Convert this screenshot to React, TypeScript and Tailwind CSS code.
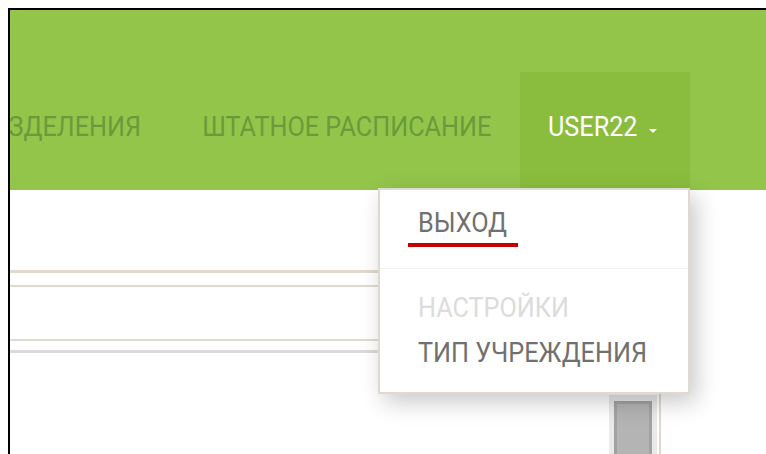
import React from "react";

const navItems = [
  { label: "ПОДРАЗДЕЛЕНИЯ", width: "w-[300px]" },
  { label: "ШТАТНОЕ РАСПИСАНИЕ", width: "w-[350px]" },
];

function Caret() {
  return (
    <span className="ml-[8px] mt-[2px] inline-block h-0 w-0 border-x-[4px] border-t-[4px] border-x-transparent border-t-white" />
  );
}

function UserMenu() {
  return (
    <div className="absolute left-[378px] top-[188px] w-[312px] h-[206px] bg-white border-2 border-[#e0d9cd] shadow-[6px_8px_22px_rgba(0,0,0,0.22)] text-[28px] leading-none">
      <div className="h-[78px] pl-[38px] pt-[19px] text-[#707070]">
        <span className="inline-block origin-left scale-x-[0.9]">ВЫХОД</span>
      </div>
      <span className="absolute left-[28px] top-[53px] w-[110px] h-[4px] bg-[#c40000]" />
      <div className="h-px bg-[#f2eee9]" />
      <div className="pl-[38px] pt-[25px] text-[#dcdcdc]">
        <span className="inline-block origin-left scale-x-[0.9]">НАСТРОЙКИ</span>
      </div>
      <div className="pl-[38px] pt-[17px] text-[#707070]">
        <span className="inline-block origin-left scale-x-[0.9]">ТИП УЧРЕЖДЕНИЯ</span>
      </div>
    </div>
  );
}

export default function App() {
  return (
    <div
      className="relative w-[766px] h-[454px] overflow-hidden bg-white pt-2 pl-2"
      style={{ fontFamily: "Roboto, 'Liberation Sans', sans-serif" }}
    >
      <div className="h-full border-t-2 border-l-2 border-black flex flex-col">
        {/* top navigation bar */}
        <header className="h-[180px] shrink-0 bg-[#93c54b] flex justify-end items-end pr-[76px] overflow-hidden text-[28px] leading-none">
          {navItems.map((item) => (
            <div
              key={item.label}
              className={`${item.width} shrink-0 h-[118px] flex items-start justify-end pt-[41px] pr-[29px] whitespace-nowrap text-[#6c9a3a]`}
            >
              <span className="inline-block origin-right scale-x-[0.9]">{item.label}</span>
            </div>
          ))}
          <div className="w-[170px] shrink-0 h-[118px] flex items-start pt-[41px] pl-[28px] bg-[#8abd3d] text-white whitespace-nowrap">
            <span className="inline-block origin-left scale-x-[0.9] w-[92px]">USER22</span>
            <span className="mt-[14px] ml-[1px] flex">
              <Caret />
            </span>
          </div>
        </header>

        {/* page body */}
        <div className="flex-1 flex">
          <div className="w-[651px] border-r-2 border-[#e0d9cd] flex flex-col">
            <div className="h-[80px]" />
            <div className="h-[3px] bg-[#e0d9cd]" />
            <div className="h-[12px]" />
            <div className="h-[2px] bg-[#e0d9cd]" />
            <div className="h-[52px]" />
            <div className="h-[2px] bg-[#e0d9cd]" />
            <div className="h-[9px]" />
            <div className="h-[3px] bg-[#dadada]" />
            <div className="flex-1 flex justify-end items-end pr-[2px]">
              <div className="w-[48px] h-[59px] bg-[#e9e9e9] px-[5px] pt-[6px]">
                <div className="h-full bg-[#b4b4b4] border-[3px] border-b-0 border-[#a2a2a2]" />
              </div>
            </div>
          </div>
        </div>
      </div>

      <UserMenu />
    </div>
  );
}
